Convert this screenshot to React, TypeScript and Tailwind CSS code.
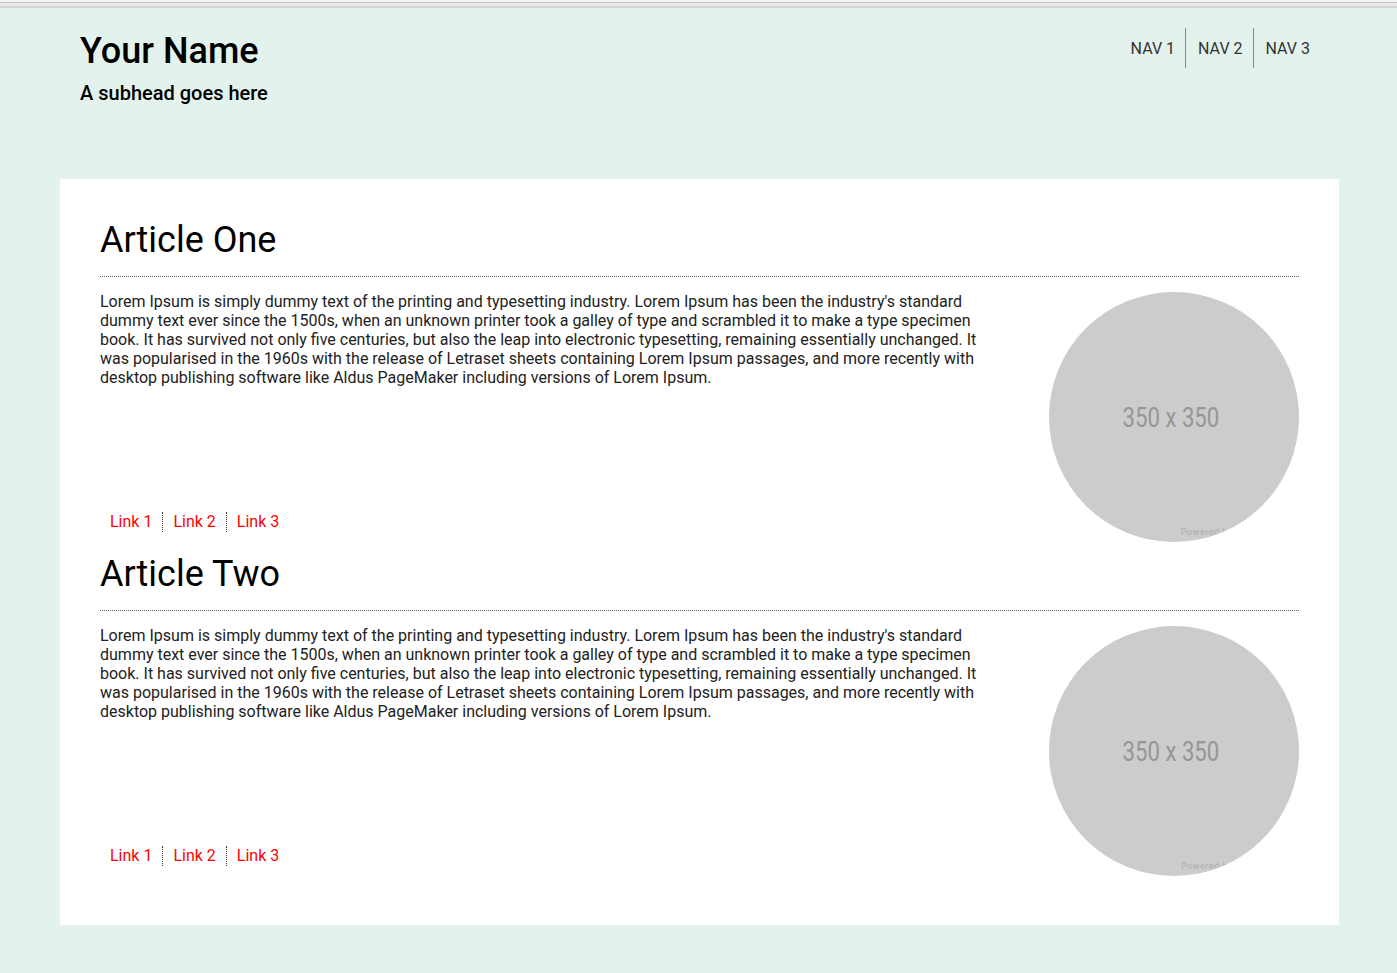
const LOREM =
  "Lorem Ipsum is simply dummy text of the printing and typesetting industry. Lorem Ipsum has been the industry's standard dummy text ever since the 1500s, when an unknown printer took a galley of type and scrambled it to make a type specimen book. It has survived not only five centuries, but also the leap into electronic typesetting, remaining essentially unchanged. It was popularised in the 1960s with the release of Letraset sheets containing Lorem Ipsum passages, and more recently with desktop publishing software like Aldus PageMaker including versions of Lorem Ipsum.";

export default function App() {
  return (
    <main className="min-h-[973px] bg-[#e3f2ed] font-['Roboto',sans-serif] text-[#222]">
      {/* browser chrome strip */}
      <div className="flex flex-col">
        <div className="h-[2px] bg-[#f4f4f4]"></div>
        <div className="h-[1px] bg-[#c6c6c6]"></div>
        <div className="h-[3px] bg-[#e8e8e8]"></div>
        <div className="h-[2px] bg-[#d6d6d6]"></div>
      </div>

      {/* header */}
      <header className="h-[171px] flex justify-between pl-[80px] pr-[77px] pt-[20px]">
        <div>
          <h1 className="text-[36px] leading-[42px] font-medium text-black mt-[2px]">Your Name</h1>
          <p className="text-[20px] leading-[23px] font-medium text-black mt-[10px]">A subhead goes here</p>
        </div>
        <nav className="flex h-10 text-[16px] text-[#333]">
          <NavItem label="NAV 1" />
          <NavItem label="NAV 2" divider />
          <NavItem label="NAV 3" divider />
        </nav>
      </header>

      {/* card */}
      <section className="ml-[60px] w-[1279px] bg-white px-[40px] pt-[40px] pb-[38px]">
        <Article title="Article One" />
        <Article title="Article Two" />
      </section>
    </main>
  );
}

function NavItem({ label, divider }: { label: string; divider?: boolean }) {
  return (
    <a className={"flex items-center pl-[12px] pr-[10px] pt-[1px] " + (divider ? "border-l border-[#888]" : "")}>{label}</a>
  );
}

function Article({ title }: { title: string }) {
  return (
    <article className="mb-[11px]">
      <h2 className="text-[36px] leading-[42px] font-normal text-black">{title}</h2>
      <hr className="mt-[15px] border-0 border-t border-dotted border-[#666]" />
      <div className="mt-[15px] flex justify-between">
        <div className="w-[900px] flex flex-col justify-between">
          <p className="text-[16px] leading-[19px] text-[#222]">{LOREM}</p>
          <div className="flex text-[16px] leading-[20px] text-[#ff0000]">
            <a className="px-[10px] py-[10px]">Link 1</a>
            <a className="px-[10px] my-[10px] border-l border-dotted border-[#333]">Link 2</a>
            <a className="px-[10px] my-[10px] border-l border-dotted border-[#333]">Link 3</a>
          </div>
        </div>
        <div className="relative w-[250px] h-[250px] shrink-0 rounded-full overflow-hidden bg-[#cccccc] flex items-center justify-center">
          <span className="inline-block text-[27px] text-[#969696] scale-x-[0.82] -ml-[6px] mt-[2px]">350 x 350</span>
          <span className="absolute left-[132px] top-[234px] text-[9px] tracking-[0.5px] text-[#aeaeae]">Powered by placehold.it</span>
        </div>
      </div>
    </article>
  );
}
